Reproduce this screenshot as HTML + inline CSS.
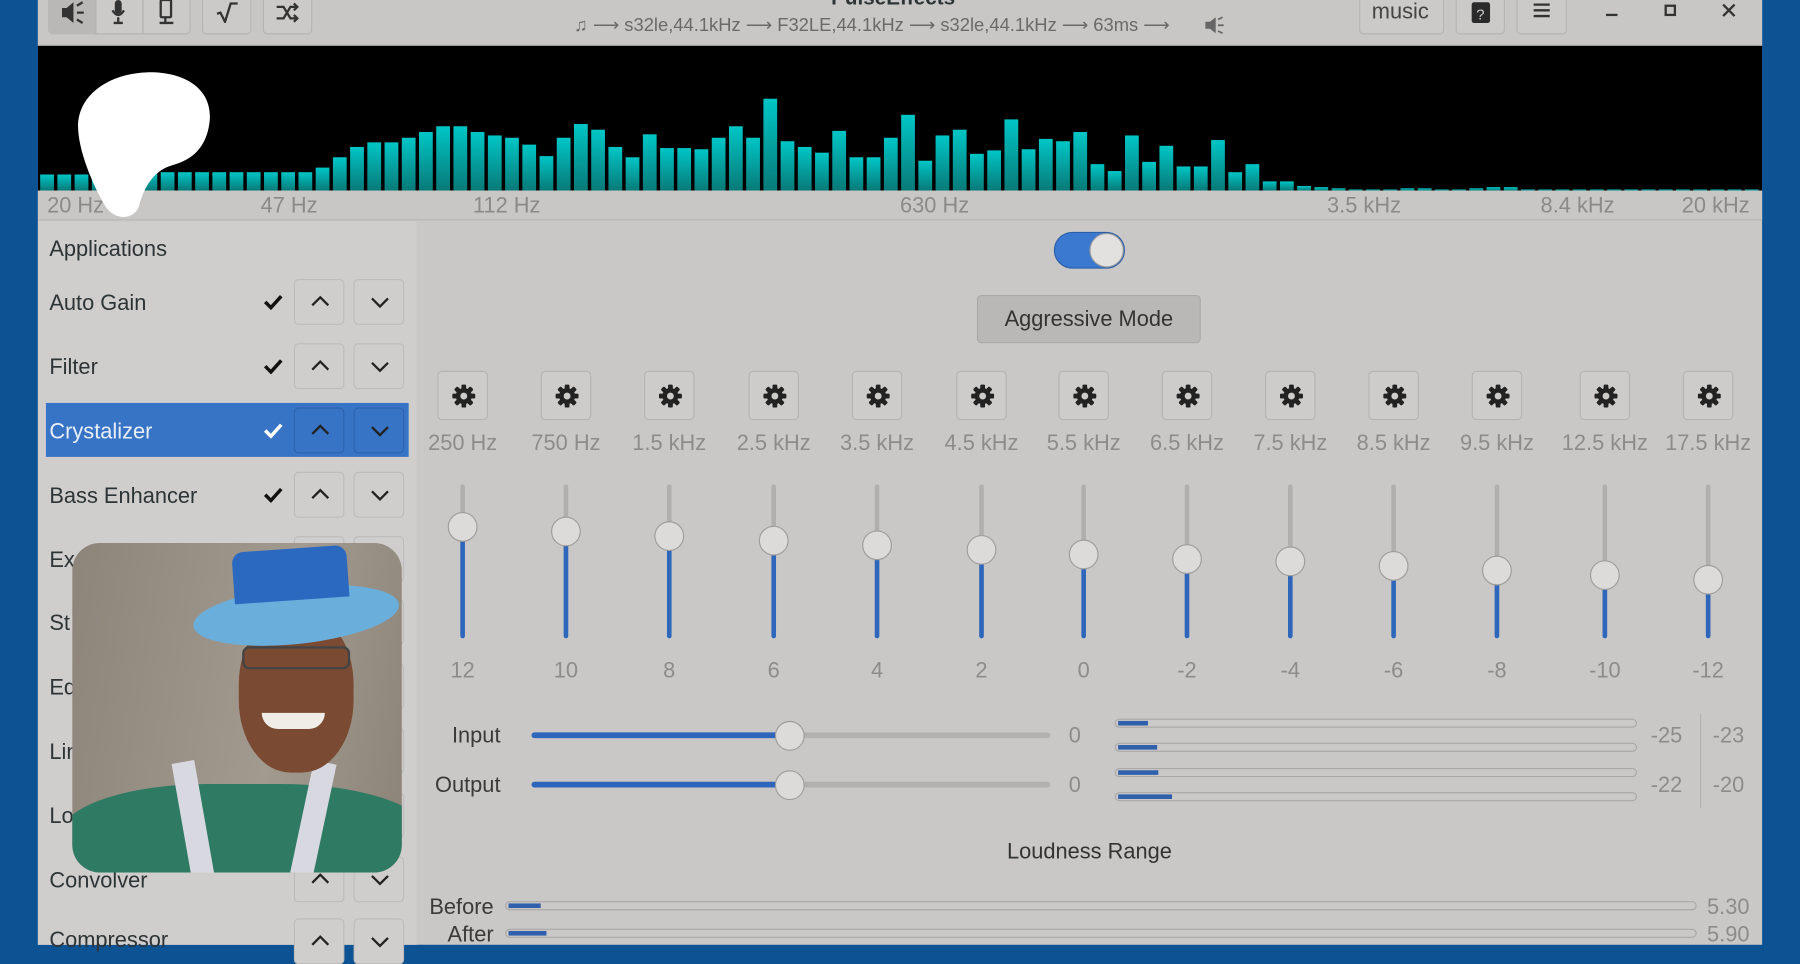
<!DOCTYPE html>
<html><head><meta charset="utf-8"><style>
*{margin:0;padding:0;box-sizing:border-box}
html,body{width:1800px;height:945px;overflow:hidden;background:#0d5292}
#s{position:absolute;left:0;top:0;width:1568px;height:823px;transform:scale(1.147959);transform-origin:0 0;font-family:"Liberation Sans",sans-serif;color:#2e3436}
.a{position:absolute}
.win{left:33px;top:0;width:1502px;height:823px;background:#c9c8c6}
.hb{position:absolute;top:-6px;height:36px;background:#cbcac8;border:1px solid #b6b5b3;border-radius:4px}
.t{position:absolute;white-space:nowrap}
.fl{top:169px;font-size:19px;color:#8b8a88}
.row{position:absolute;left:43px;font-size:19px}
.ud{position:absolute;width:44px;height:40px;border:1px solid #bdbcba;border-radius:4px;background:#cfcecd}
.ud svg{position:absolute;left:13px;top:12px}
.gear{position:absolute;top:323px;width:44px;height:43px;border:1px solid #b5b4b2;border-radius:4px;background:#cdccca}
.gear svg{position:absolute;left:12px;top:11px}
.fq{position:absolute;top:376px;font-size:19px;color:#8d8c8a;width:100px;margin-left:-50px;text-align:center}
.vt{position:absolute;top:422px;width:4px;height:134px;margin-left:-2px;background:#b0afad;border-radius:2px}
.vf{position:absolute;width:4px;margin-left:-2px;background:#2e66bb;border-radius:2px}
.kn{position:absolute;width:26px;height:26px;margin-left:-13px;margin-top:-13px;border-radius:50%;background:#dcdbd9;border:1px solid #9e9d9b}
.vv{position:absolute;top:574px;font-size:19px;color:#8d8c8a;width:60px;margin-left:-30px;text-align:center}
.lb{position:absolute;left:971px;width:455px;height:8px;border:1px solid #a9a8a6;border-radius:4px;background:#cac9c7}
.lb i{position:absolute;left:2px;top:1px;height:4px;background:#2e60ab}
</style></head><body><div id="s">
<div class="a win"></div>
<div class="a" style="left:33px;top:0;width:1502px;height:40px;background:#c8c7c5;border-bottom:1px solid #a9a8a6"></div>
<div class="hb" style="left:42px;width:124px"></div>
<div class="a" style="left:42px;top:-6px;width:41px;height:36px;background:#b9b8b6;border-radius:4px 0 0 4px"></div>
<div class="a" style="left:83px;top:-6px;width:1px;height:36px;background:#b1b0ae"></div>
<div class="a" style="left:124px;top:-6px;width:1px;height:36px;background:#b1b0ae"></div>
<svg class="a" style="left:52px;top:0" width="22" height="22"><path d="M2 7h4l6-5v18l-6-5H2z" fill="#333"/><path d="M15 5l5-3M15 11h6M15 17l5 3" stroke="#333" stroke-width="2"/></svg>
<svg class="a" style="left:96px;top:0" width="14" height="22"><rect x="4" y="0" width="6" height="12" rx="3" fill="#333"/><path d="M2 9q5 8 10 0M7 15v4M3 20h8" stroke="#333" stroke-width="2" fill="none"/></svg>
<svg class="a" style="left:137px;top:0" width="16" height="22"><rect x="3" y="0" width="9" height="15" rx="1" stroke="#333" stroke-width="2" fill="none"/><path d="M7 15v4M2 20h12" stroke="#333" stroke-width="2"/></svg>
<div class="hb" style="left:176px;width:43px"></div>
<svg class="a" style="left:187px;top:2px" width="22" height="18"><path d="M2 10l3-1 4 8 5-16h6" stroke="#333" stroke-width="2" fill="none"/></svg>
<div class="hb" style="left:229px;width:43px"></div>
<svg class="a" style="left:240px;top:2px" width="22" height="18"><path d="M1 4h6l6 10h6M1 14h6l6-10h6M16 1l3 3-3 3M16 11l3 3-3 3" stroke="#333" stroke-width="2" fill="none"/></svg>
<div class="t" style="left:724px;top:-12px;font-size:18px;font-weight:bold">PulseEffects</div>
<div class="t" style="left:500px;top:12px;font-size:16px;color:#6a6a68">♫ ⟶ s32le,44.1kHz ⟶ F32LE,44.1kHz ⟶ s32le,44.1kHz ⟶ 63ms ⟶</div>
<svg class="a" style="left:1048px;top:12px" width="20" height="20"><path d="M2 7h4l5-4v14l-5-4H2z" fill="#666"/><path d="M13 5l4-2M13 10h5M13 15l4 2" stroke="#666" stroke-width="1.5"/></svg>
<div class="hb" style="left:1184px;width:74px"></div>
<div class="t" style="left:1195px;top:0;font-size:19px;color:#444">music</div>
<div class="hb" style="left:1268px;width:43px"></div>
<svg class="a" style="left:1280px;top:0" width="20" height="22"><rect x="2" y="2" width="16" height="18" rx="2" fill="#2a2a2a"/><text x="6" y="17" font-size="13" fill="#ccc" font-family="Liberation Sans">?</text></svg>
<div class="hb" style="left:1321px;width:44px"></div>
<svg class="a" style="left:1335px;top:2px" width="16" height="14"><path d="M1 2h14M1 7h14M1 12h14" stroke="#333" stroke-width="2"/></svg>
<div class="a" style="left:1399px;top:12px;width:10px;height:2px;background:#333"></div>
<div class="a" style="left:1450px;top:4px;width:10px;height:10px;border:2px solid #333"></div>
<svg class="a" style="left:1500px;top:3px" width="12" height="12"><path d="M1 1l10 10M11 1l-10 10" stroke="#333" stroke-width="2"/></svg>
<div class="a" id="sp" style="left:33px;top:40px;width:1502px;height:126px;background:#000;overflow:hidden"></div>
<div class="a" style="left:33px;top:166px;width:1502px;height:26px;background:#c8c7c5;border-bottom:1px solid #b8b7b5"></div>
<div class="t fl" style="left:41px">20 Hz</div>
<div class="t fl" style="left:227px">47 Hz</div>
<div class="t fl" style="left:412px">112 Hz</div>
<div class="t fl" style="left:784px">630 Hz</div>
<div class="t fl" style="left:1156px">3.5 kHz</div>
<div class="t fl" style="left:1342px">8.4 kHz</div>
<div class="t fl" style="left:1465px">20 kHz</div>
<svg class="a" style="left:66px;top:60px" width="120" height="130"><path d="M62 3C95 2 122 18 116 50C112 72 98 80 84 84C70 88 60 100 55 120C50 132 34 132 26 120C14 100 2 70 2 50C2 22 30 4 62 3Z" fill="#fff"/></svg>
<div class="a" style="left:33px;top:193px;width:330px;height:630px;background:#cfcecd"></div>
<div class="row" style="top:207px">Applications</div>
<div class="a" style="left:40px;top:351px;width:316px;height:47px;background:#3874c6"></div>
<div class="row" style="top:254px">Auto Gain</div>
<div class="row" style="top:310px">Filter</div>
<div class="row" style="top:366px;color:#e8eef8">Crystalizer</div>
<div class="row" style="top:422px">Bass Enhancer</div>
<div class="row" style="top:478px">Ex</div>
<div class="row" style="top:533px">St</div>
<div class="row" style="top:589px">Eq</div>
<div class="row" style="top:645px">Lin</div>
<div class="row" style="top:701px">Lo</div>
<div class="row" style="top:757px">Convolver</div>
<div class="row" style="top:809px">Compressor</div>
<div id="ud"></div>
<div class="a" style="left:63px;top:473px;width:287px;height:287px;border-radius:24px;overflow:hidden;background:linear-gradient(100deg,#8d847a,#a29a8f 60%,#8c8378)">
 <div class="a" style="left:-10px;top:210px;width:320px;height:110px;background:#2e7a63;border-radius:40% 40% 0 0"></div>
 <div class="a" style="left:95px;top:190px;width:20px;height:100px;background:#d8d8e0;transform:rotate(-10deg)"></div>
 <div class="a" style="left:200px;top:190px;width:20px;height:100px;background:#d8d8e0;transform:rotate(12deg)"></div>
 <div class="a" style="left:145px;top:60px;width:100px;height:140px;border-radius:45%;background:#7a4a32"></div>
 <div class="a" style="left:148px;top:90px;width:94px;height:20px;border:2px solid #444;border-radius:6px"></div>
 <div class="a" style="left:165px;top:148px;width:55px;height:14px;background:#f0ede8;border-radius:0 0 30px 30px"></div>
 <div class="a" style="left:105px;top:38px;width:180px;height:50px;border-radius:50%;background:#6aaedc;transform:rotate(-6deg)"></div>
 <div class="a" style="left:140px;top:5px;width:100px;height:45px;background:#2b69c0;border-radius:10px 10px 0 0;transform:rotate(-4deg)"></div>
</div>
<div class="a" style="left:918px;top:202px;width:62px;height:32px;border-radius:16px;background:#3b79d0;border:1px solid #2a5fa8"></div>
<div class="a" style="left:949px;top:203px;width:30px;height:30px;border-radius:50%;background:#e2e1df;border:1px solid #9e9d9b"></div>
<div class="a" style="left:851px;top:257px;width:195px;height:42px;border-radius:4px;background:#b9b8b6;border:1px solid #a9a8a6"></div>
<div class="t" style="left:851px;top:268px;width:195px;text-align:center;font-size:19px;color:#333">Aggressive Mode</div>
<div id="eq"></div>
<div class="fq" style="left:403px">250 Hz</div><div class="fq" style="left:493px">750 Hz</div><div class="fq" style="left:583px">1.5 kHz</div><div class="fq" style="left:674px">2.5 kHz</div><div class="fq" style="left:764px">3.5 kHz</div><div class="fq" style="left:855px">4.5 kHz</div><div class="fq" style="left:944px">5.5 kHz</div><div class="fq" style="left:1034px">6.5 kHz</div><div class="fq" style="left:1124px">7.5 kHz</div><div class="fq" style="left:1214px">8.5 kHz</div><div class="fq" style="left:1304px">9.5 kHz</div><div class="fq" style="left:1398px">12.5 kHz</div><div class="fq" style="left:1488px">17.5 kHz</div>
<div class="vv" style="left:403px">12</div><div class="vv" style="left:493px">10</div><div class="vv" style="left:583px">8</div><div class="vv" style="left:674px">6</div><div class="vv" style="left:764px">4</div><div class="vv" style="left:855px">2</div><div class="vv" style="left:944px">0</div><div class="vv" style="left:1034px">-2</div><div class="vv" style="left:1124px">-4</div><div class="vv" style="left:1214px">-6</div><div class="vv" style="left:1304px">-8</div><div class="vv" style="left:1398px">-10</div><div class="vv" style="left:1488px">-12</div>
<div id="gears"></div>
<div class="t" style="left:336px;top:631px;width:100px;text-align:right;font-size:19px;color:#3a3a3a">Input</div>
<div class="t" style="left:336px;top:674px;width:100px;text-align:right;font-size:19px;color:#3a3a3a">Output</div>
<div class="a" style="left:463px;top:638px;width:452px;height:5px;border-radius:3px;background:#b2b1af"></div>
<div class="a" style="left:463px;top:638px;width:225px;height:5px;border-radius:3px;background:#2e66bb"></div>
<div class="a" style="left:463px;top:681px;width:452px;height:5px;border-radius:3px;background:#b2b1af"></div>
<div class="a" style="left:463px;top:681px;width:225px;height:5px;border-radius:3px;background:#2e66bb"></div>
<div class="kn" style="left:688px;top:641px"></div>
<div class="kn" style="left:688px;top:684px"></div>
<div class="t" style="left:931px;top:631px;font-size:19px;color:#8d8c8a">0</div>
<div class="t" style="left:931px;top:674px;font-size:19px;color:#8d8c8a">0</div>
<div class="lb" style="top:626px"><i style="width:26px"></i></div>
<div class="lb" style="top:647px"><i style="width:34px"></i></div>
<div class="lb" style="top:669px"><i style="width:35px"></i></div>
<div class="lb" style="top:690px"><i style="width:47px"></i></div>
<div class="t" style="left:1438px;top:631px;font-size:19px;color:#8d8c8a">-25</div>
<div class="t" style="left:1492px;top:631px;font-size:19px;color:#8d8c8a">-23</div>
<div class="t" style="left:1438px;top:674px;font-size:19px;color:#8d8c8a">-22</div>
<div class="t" style="left:1492px;top:674px;font-size:19px;color:#8d8c8a">-20</div>
<div class="a" style="left:1481px;top:622px;width:1px;height:82px;background:#b3b2b0"></div>
<div class="t" style="left:849px;top:732px;width:200px;text-align:center;font-size:19px;color:#333">Loudness Range</div>
<div class="t" style="left:330px;top:780px;width:100px;text-align:right;font-size:19px;color:#3a3a3a">Before</div>
<div class="t" style="left:330px;top:804px;width:100px;text-align:right;font-size:19px;color:#3a3a3a">After</div>
<div class="lb" style="left:440px;width:1038px;top:785px"><i style="width:28px"></i></div>
<div class="lb" style="left:440px;width:1038px;top:809px"><i style="width:33px"></i></div>
<div class="t" style="left:1487px;top:780px;font-size:19px;color:#8d8c8a">5.30</div>
<div class="t" style="left:1487px;top:804px;font-size:19px;color:#8d8c8a">5.90</div>
</div>
<script>
var tops=[152,152,152,152,152,152,150,150,150,150,150,150,150,150,150,150,146,137,128,124,124,120,115,110,110,115,118,120,126,136,120,108,113,128,137,117,129,129,130,120,110,120,86,123,128,133,114,137,137,120,100,140,118,113,134,131,104,130,121,123,115,143,149,118,141,127,145,145,122,150,143,158,158,162,163,164,165,165,165,164,164,165,165,164,163,163,165,165,165,165,165,165,165,165,165,165,165,165,165,165];
var sp=document.getElementById('sp'),h='';
for(var i=0;i<tops.length;i++){var t=tops[i]-40,x=2+i*15;if(x>1490)break;
h+='<div style="position:absolute;left:'+x+'px;top:'+t+'px;width:12px;height:'+(126-t)+'px;background:linear-gradient(#00c6c6,#087a78)"></div>';}
sp.innerHTML=h;
var ud=document.getElementById('ud'),u='';
var rows=[263,319,375,431,487,542,598,654,710,766,820];
rows.forEach(function(y,i){var sel=i==2,b=sel?'background:#3874c6;border-color:#2d62ad':'';
u+='<div class="ud" style="left:256px;top:'+(y-20)+'px;'+b+'"><svg width="18" height="14"><path d="M2 10l7-7 7 7" stroke="#222" stroke-width="2" fill="none"/></svg></div>';
u+='<div class="ud" style="left:308px;top:'+(y-20)+'px;'+b+'"><svg width="18" height="14"><path d="M2 4l7 7 7-7" stroke="#222" stroke-width="2" fill="none"/></svg></div>';
if(i<4)u+='<svg style="position:absolute;left:229px;top:'+(y-7)+'px" width="18" height="14"><path d="M2 7l5 5 9-10" stroke="'+(sel?'#fff':'#111')+'" stroke-width="3" fill="none"/></svg>';});
ud.innerHTML=u;
var xs=[403,493,583,674,764,855,944,1034,1124,1214,1304,1398,1488],ks=[459,463,467,471,475,479,483,487,489,493,497,501,505],e='',g='';
var gp='';for(var k=0;k<8;k++){var a=k*Math.PI/4;gp+='<rect x="8" y="0" width="4" height="20" rx="1" transform="rotate('+(k*45)+' 10 10)" fill="#222"/>';}
xs.forEach(function(x,i){e+='<div class="vt" style="left:'+x+'px"></div><div class="vf" style="left:'+x+'px;top:'+ks[i]+'px;height:'+(556-ks[i])+'px"></div><div class="kn" style="left:'+x+'px;top:'+ks[i]+'px"></div>';
g+='<div class="gear" style="left:'+(x-22)+'px"><svg width="20" height="20">'+gp+'<circle cx="10" cy="10" r="7" fill="#222"/><circle cx="10" cy="10" r="3" fill="#cdccca"/></svg></div>';});
document.getElementById('eq').innerHTML=e;
document.getElementById('gears').innerHTML=g;
</script>
</body></html>
